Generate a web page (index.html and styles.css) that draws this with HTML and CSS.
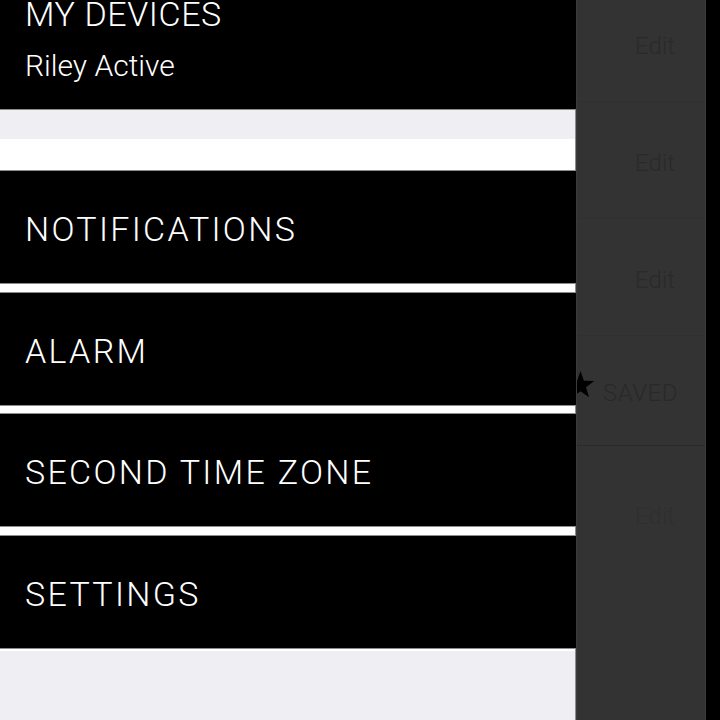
FILE: index.html
```html
<!DOCTYPE html>
<html lang="en">
<head>
<meta charset="utf-8">
<title>Menu</title>
<link rel="stylesheet" href="styles.css">
</head>
<body>
<div class="app">
  <nav class="menu">
    <header class="devices">
      <div class="devices-title">MY DEVICES</div>
      <div class="devices-name">Riley Active</div>
    </header>
    <div class="band"></div>
    <ul class="menu-list">
      <li class="menu-item"><span>NOTIFICATIONS</span></li>
      <li class="menu-item"><span>ALARM</span></li>
      <li class="menu-item"><span>SECOND TIME ZONE</span></li>
      <li class="menu-item"><span>SETTINGS</span></li>
    </ul>
  </nav>
  <section class="panel">
    <div class="panel-scroll">
      <div class="panel-row"><span class="edit">Edit</span></div>
      <div class="panel-row"><span class="edit">Edit</span></div>
      <div class="panel-row"><span class="edit">Edit</span></div>
      <div class="panel-row saved-row">
        <svg class="star" viewBox="0 0 29 29" width="29" height="29" aria-hidden="true">
          <polygon points="14.5,0 17.9,9.8 28.2,10 20,16.3 23,26.2 14.5,20.3 6,26.2 9,16.3 0.8,10 11.1,9.8" fill="#000"/>
        </svg>
        <span class="saved">SAVED</span>
      </div>
      <div class="panel-row last-row"><span class="edit faint">Edit</span></div>
    </div>
  </section>
  <div class="edge"></div>
</div>
</body>
</html>
```

FILE: styles.css
```css
* {
  box-sizing: border-box;
}

html, body {
  margin: 0;
  padding: 0;
  height: 100%;
}

body {
  background: #000;
  font-family: Roboto, "Liberation Sans", Arial, sans-serif;
  overflow: hidden;
}

.app {
  display: flex;
  width: 720px;
  height: 720px;
  overflow: hidden;
}

/* ---------- left menu ---------- */
.menu {
  width: 576px;
  flex: none;
  background: #efeef3;
  border-right: 1px solid #8c8c8c;
  display: flex;
  flex-direction: column;
}

.devices {
  background: #000;
  color: #fff;
  height: 110px;
  margin-right: -1px;
  border-bottom: 1px solid #8c8c8c;
  padding-left: 25px;
  display: flex;
  flex-direction: column;
}

.devices-title {
  margin-top: -6px;
  font-size: 34px;
  line-height: 40px;
  font-weight: 300;
  letter-spacing: 0.6px;
}

.devices-name {
  margin-top: 14px;
  font-size: 30px;
  line-height: 35px;
  font-weight: 300;
}

.band {
  height: 29px;
  flex: none;
}

.menu-list {
  list-style: none;
  margin: 0;
  padding: 31px 0 2px 0;
  background: #fff;
  display: flex;
  flex-direction: column;
  gap: 7.6px;
}

.menu-item {
  height: 114px;
  margin-right: -1px;
  background: #000;
  border-top: 1px solid #8c8c8c;
  border-bottom: 1px solid #8c8c8c;
  color: #fff;
  padding: 4px 0 0 25px;
  display: flex;
  align-items: center;
  font-size: 34px;
  line-height: 40px;
  font-weight: 300;
  letter-spacing: 2.3px;
}

/* ---------- right panel ---------- */
.panel {
  width: 130px;
  flex: none;
  background: #333;
  border-left: 1px solid #3b3b3b;
  border-right: 1px solid #3b3b3b;
  overflow: hidden;
}

.panel-scroll {
  margin-top: -15px;
  display: flex;
  flex-direction: column;
}

.panel-row {
  height: 117px;
  border-bottom: 1px solid #303030;
  padding: 5px 30px 0 0;
  display: flex;
  align-items: center;
  justify-content: flex-end;
  font-size: 24px;
  line-height: 28px;
  font-weight: 300;
}

.saved-row {
  height: 110px;
  padding-right: 27px;
  border-bottom-color: #292929;
}

.last-row {
  height: 134px;
  border-bottom: none;
}

.edit {
  color: #2a2a2a;
}

.edit.faint {
  color: #2f2f2f;
}

.star {
  flex: none;
  margin: 0 8px 16px -13px;
}

.saved {
  color: #292929;
  letter-spacing: 0.5px;
}

.edge {
  flex: 1;
  background: #000;
}
```
